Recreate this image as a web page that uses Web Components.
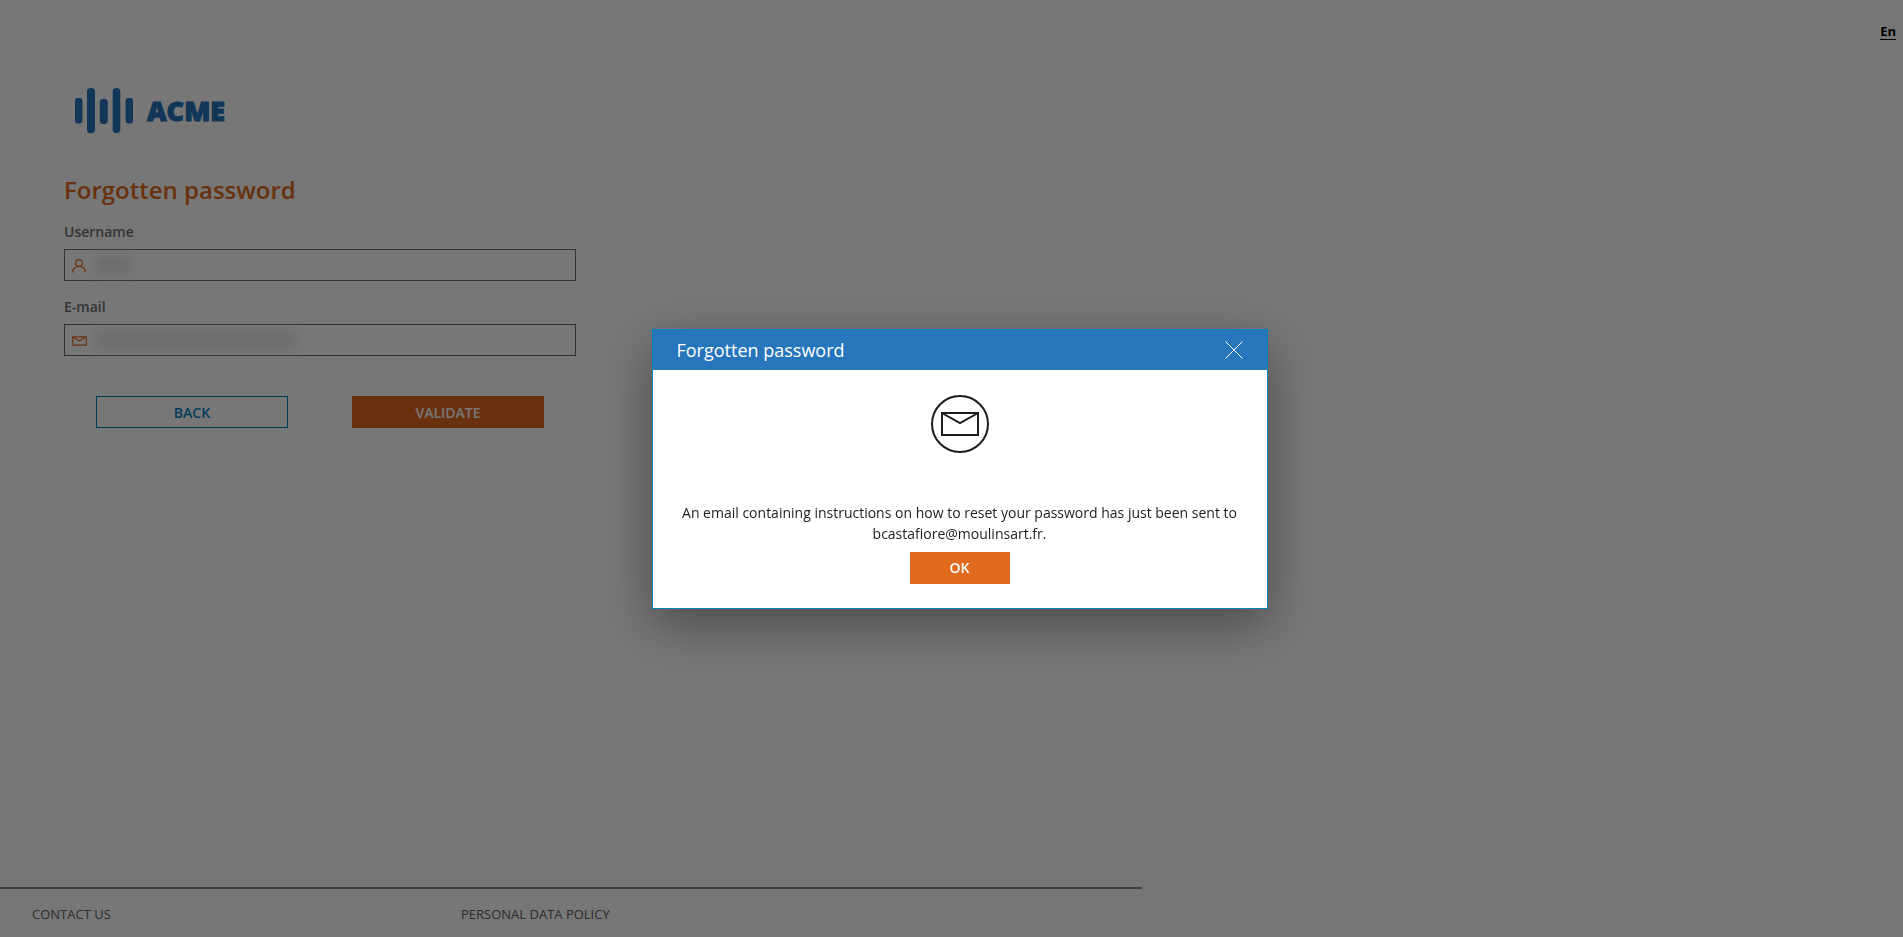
<!DOCTYPE html>
<html lang="en">
<head>
  <meta charset="utf-8">
  <meta name="viewport" content="width=device-width, initial-scale=1">
  <title>Forgotten password</title>
  <style>
    html, body {
      margin: 0;
      height: 100%;
    }

    body {
      --brand: #2775bb;
      --accent: #e06a1e;
      --link: #0082c3;
      --grey: #707070;
      background: #fff;
      color: var(--grey);
      font-family: 'Open Sans', sans-serif;
      font-size: 14px;
      line-height: 20px;
    }
  </style>
</head>
<body>
  <login-page>
    <a slot="lang" href="#en">En</a>
    <brand-logo>ACME</brand-logo>
    <password-form heading="Forgotten password">
      <text-field label="Username" name="username" type="text" icon="user"></text-field>
      <text-field label="E-mail" name="email" type="email" icon="mail"></text-field>
      <action-button slot="actions" variant="outline">BACK</action-button>
      <action-button slot="actions">VALIDATE</action-button>
    </password-form>
    <a slot="footer" href="#contact">CONTACT US</a>
    <a slot="footer" href="#policy">PERSONAL DATA POLICY</a>
  </login-page>

  <message-dialog heading="Forgotten password">
    An email containing instructions on how to reset your password has just been sent to bcastafiore@moulinsart.fr.
    <action-button slot="actions">OK</action-button>
  </message-dialog>

  <script>
    class LoginPage extends HTMLElement {
      constructor() {
        super();
        this.attachShadow({ mode: 'open' });
        this.shadowRoot.innerHTML = `
          <style>
            :host {
              display: flex;
              flex-direction: column;
              min-height: 100vh;
            }

            nav {
              display: flex;
              justify-content: flex-end;
              padding: 24px 7px 0;
            }

            ::slotted([slot="lang"]) {
              color: #000;
              font-size: 13px;
              font-weight: 700;
              line-height: 15px;
              text-decoration: none;
              border-bottom: 1px solid #000;
            }

            main {
              flex: 1;
              display: flex;
              flex-direction: column;
              align-items: flex-start;
              gap: 41px;
              padding: 48px 64px;
            }

            footer {
              display: grid;
              grid-template-columns: 429px 1fr;
              box-sizing: border-box;
              width: 60%;
              padding: 15px 32px 13px;
              border-top: 2px solid #888;
            }

            ::slotted([slot="footer"]) {
              color: #606060;
              font-size: 13px;
              text-decoration: none;
            }
          </style>
          <nav><slot name="lang"></slot></nav>
          <main><slot></slot></main>
          <footer><slot name="footer"></slot></footer>
        `;
      }
    }

    class BrandLogo extends HTMLElement {
      constructor() {
        super();
        this.attachShadow({ mode: 'open' });
        this.shadowRoot.innerHTML = `
          <style>
            :host {
              display: flex;
              align-items: center;
              gap: 14px;
              padding-left: 11px;
              color: var(--brand);
              font-size: 27px;
              font-weight: 800;
              line-height: 45px;
            }

            svg {
              fill: currentColor;
            }

            span {
              -webkit-text-stroke: 1px currentColor;
            }
          </style>
          <svg width="58" height="45" viewBox="0 0 58 45" aria-hidden="true">
            <rect x="0" y="10" width="7.4" height="25.4" rx="2.4"/>
            <rect x="12" y="0" width="8" height="45" rx="3.6"/>
            <rect x="24.8" y="11" width="8" height="25" rx="3.4"/>
            <rect x="37.7" y="0" width="7.6" height="45" rx="3.6"/>
            <rect x="50.6" y="10" width="7.4" height="25.4" rx="2.4"/>
          </svg>
          <span><slot></slot></span>
        `;
      }
    }

    class PasswordForm extends HTMLElement {
      constructor() {
        super();
        this.attachShadow({ mode: 'open' });
        this.shadowRoot.innerHTML = `
          <style>
            :host {
              display: block;
              width: 100%;
              max-width: 512px;
            }

            form {
              display: flex;
              flex-direction: column;
              gap: 16px;
            }

            h1 {
              margin: 0;
              color: var(--accent);
              font-size: 24px;
              font-weight: 600;
              line-height: 32px;
            }

            .actions {
              display: grid;
              grid-template-columns: 1fr 1fr;
              gap: 64px;
              padding: 24px 32px 0;
            }
          </style>
          <form>
            <h1></h1>
            <slot></slot>
            <div class="actions"><slot name="actions"></slot></div>
          </form>
        `;
      }

      connectedCallback() {
        this.shadowRoot.querySelector('h1').textContent = this.getAttribute('heading') || '';
      }
    }

    const fieldIcons = {
      user: '<circle cx="7" cy="4" r="3.4"/><path d="M.7 13.5C.8 9.6 3.3 7.4 7 7.4s6.2 2.2 6.3 6.1"/>',
      mail: '<path d="M.7 2.8h13.6v8.4H.7zM1 3l6.500 4L14 3"/>'
    };

    class TextField extends HTMLElement {
      constructor() {
        super();
        this.attachShadow({ mode: 'open' });
        this.shadowRoot.innerHTML = `
          <style>
            :host {
              display: flex;
              flex-direction: column;
              gap: 7px;
            }

            label {
              font-weight: 600;
            }

            .box {
              display: flex;
              align-items: center;
              box-sizing: border-box;
              height: 32px;
              padding: 2px 0 0 7px;
              border: 1px solid var(--grey);
              position: relative;
            }

            svg {
              flex: none;
              fill: none;
              stroke: var(--accent);
              stroke-width: 1.2;
            }

            input {
              flex: 1;
              min-width: 0;
              height: 100%;
              box-sizing: border-box;
              padding: 0 8px;
              border: 0;
              outline: 0;
              background: none;
              font: inherit;
            }

            .mask {
              position: absolute;
              left: 30px;
              top: 6px;
              bottom: 6px;
              width: 36px;
              background: #eaeaea;
              filter: blur(6px);
              pointer-events: none;
            }

            :host([icon="mail"]) .mask {
              width: 200px;
            }
          </style>
          <label for="field"></label>
          <div class="box">
            <svg width="15" height="14" viewBox="0 0 15 14" aria-hidden="true"></svg>
            <input id="field">
            <span class="mask"></span>
          </div>
        `;
      }

      connectedCallback() {
        const input = this.shadowRoot.querySelector('input');
        input.type = this.getAttribute('type') || 'text';
        input.name = this.getAttribute('name') || '';
        this.shadowRoot.querySelector('label').textContent = this.getAttribute('label') || '';
        this.shadowRoot.querySelector('svg').innerHTML = fieldIcons[this.getAttribute('icon')] || '';
      }
    }

    class ActionButton extends HTMLElement {
      constructor() {
        super();
        this.attachShadow({ mode: 'open' });
        this.shadowRoot.innerHTML = `
          <style>
            :host {
              display: block;
              min-width: 100px;
            }

            button {
              width: 100%;
              height: 32px;
              padding: 1px 16px 0;
              border: 1px solid var(--accent);
              background: var(--accent);
              color: #fff;
              font: inherit;
              font-weight: 600;
              cursor: pointer;
            }

            :host([variant="outline"]) button {
              border-color: var(--link);
              background: none;
              color: var(--link);
            }
          </style>
          <button type="button"><slot></slot></button>
        `;
      }
    }

    class MessageDialog extends HTMLElement {
      constructor() {
        super();
        this.attachShadow({ mode: 'open' });
        this.shadowRoot.innerHTML = `
          <style>
            :host {
              display: flex;
              align-items: center;
              justify-content: center;
              position: fixed;
              inset: 0;
              padding-left: 16px;
              background: rgba(0, 0, 0, 0.535);
            }

            :host([hidden]) {
              display: none;
            }

            section {
              box-sizing: border-box;
              width: 616px;
              max-width: 100%;
              border: 1px solid var(--link);
              background: #fff;
              color: #1d1d1b;
              box-shadow: 0 16px 48px rgba(0, 0, 0, 0.38);
            }

            header {
              display: flex;
              align-items: center;
              justify-content: space-between;
              height: 40px;
              padding: 0 24px;
              background: var(--brand);
              color: #fff;
            }

            h2 {
              margin: 0;
              font-size: 18px;
              font-weight: 400;
            }

            .close {
              display: flex;
              padding: 0;
              border: 0;
              background: none;
              color: inherit;
              cursor: pointer;
            }

            svg {
              fill: none;
              stroke: currentColor;
            }

            .body {
              display: flex;
              flex-direction: column;
              align-items: center;
              padding: 25px 24px 24px;
            }

            p {
              margin: 49px 0 8px;
              line-height: 21px;
              text-align: center;
            }
          </style>
          <section role="dialog" aria-modal="true" aria-labelledby="title">
            <header>
              <h2 id="title"></h2>
              <button class="close" type="button" aria-label="Close">
                <svg width="18" height="18" viewBox="0 0 18 18"><path d="M.5.5l17 17M17.5.5l-17 17"/></svg>
              </button>
            </header>
            <div class="body">
              <svg width="58" height="58" viewBox="0 0 58 58" stroke-width="2" aria-hidden="true">
                <circle cx="29" cy="29" r="28"/>
                <path d="M11 18h36v22H11zM11 18l18 10 18-10"/>
              </svg>
              <p><slot></slot></p>
              <slot name="actions"></slot>
            </div>
          </section>
        `;
        this.shadowRoot.querySelector('.close').addEventListener('click', this.close);
      }

      connectedCallback() {
        this.shadowRoot.querySelector('h2').textContent = this.getAttribute('heading') || '';
        this.querySelector('[slot="actions"]').addEventListener('click', this.close);
      }

      close = () => {
        this.hidden = true;
      };
    }

    customElements.define('login-page', LoginPage);
    customElements.define('brand-logo', BrandLogo);
    customElements.define('password-form', PasswordForm);
    customElements.define('text-field', TextField);
    customElements.define('action-button', ActionButton);
    customElements.define('message-dialog', MessageDialog);
  </script>
</body>
</html>
